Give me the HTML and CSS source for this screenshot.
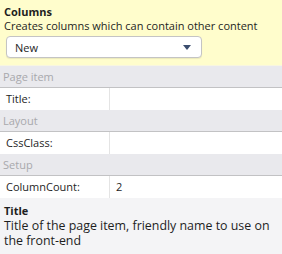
FILE: index.html
```html
<!DOCTYPE html>
<html lang="en">
<head>
  <meta charset="UTF-8" />
  <title>Columns</title>
  <link rel="stylesheet" href="styles.css">
</head>
<body>

<!-- Item header -->
<div class="intro">
  <div class="intro-title">Columns</div>
  <div class="intro-desc">Creates columns which can contain other content</div>
  <div class="select">
    <span>New</span>
    <svg class="caret" width="8" height="5" viewBox="0 0 8 5"><path d="M0 0h8L4 5z" fill="#3b4d6e"/></svg>
  </div>
</div>

<!-- Property grid -->
<div class="grid">
  <div class="group">Page item</div>
  <div class="prop">
    <div class="prop-name">Title:</div>
    <div class="prop-value"></div>
  </div>

  <div class="group">Layout</div>
  <div class="prop">
    <div class="prop-name">CssClass:</div>
    <div class="prop-value"></div>
  </div>

  <div class="group">Setup</div>
  <div class="prop">
    <div class="prop-name">ColumnCount:</div>
    <div class="prop-value">2</div>
  </div>
</div>

<!-- Help -->
<div class="help">
  <div class="help-title">Title</div>
  <div class="help-desc">Title of the page item, friendly name to use on the front-end</div>
</div>

</body>
</html>
```

FILE: styles.css
```css
* {
  margin: 0;
  padding: 0;
  box-sizing: border-box;
}

body {
  font-family: 'Open Sans', sans-serif;
  font-size: 11px;
  color: #1e1e1e;
  width: 282px;
  height: 254px;
  display: flex;
  flex-direction: column;
  background: #f4f4f6;
  overflow: hidden;
}

.intro {
  background: #fffdcc;
  padding: 5px 4px 0 4px;
  height: 66px;
  flex-shrink: 0;
  border-bottom: 1px solid #f8f6e0;
}

.intro-title {
  font-weight: bold;
  line-height: 14px;
}

.intro-desc {
  line-height: 14px;
}

.select {
  margin: 3px 0 0 2px;
  width: 196px;
  height: 22px;
  background: #fff;
  border: 1px solid #c4c4c4;
  border-radius: 4px;
  box-shadow: 0 1px 1px rgba(0, 0, 0, 0.08);
  display: flex;
  align-items: center;
  justify-content: space-between;
  padding: 0 10px 0 8px;
}

.grid {
  background: #fff;
  flex-shrink: 0;
}

.group {
  height: 22px;
  line-height: 21px;
  padding-left: 3px;
  background: #e9e9ed;
  color: #a8a8ac;
  border-bottom: 1px solid #c2c2c4;
}

.prop {
  display: flex;
  height: 22px;
  line-height: 22px;
}

.prop-name {
  width: 110px;
  padding-left: 6px;
  border-right: 1px solid #e4e4e4;
}

.prop-value {
  flex: 1;
  padding-left: 6px;
}

.help {
  flex: 1;
  padding: 6px 2px 0 4px;
}

.help-title {
  font-weight: bold;
  line-height: 14px;
}

.help-desc {
  font-size: 12.4px;
  line-height: 15px;
}
```
